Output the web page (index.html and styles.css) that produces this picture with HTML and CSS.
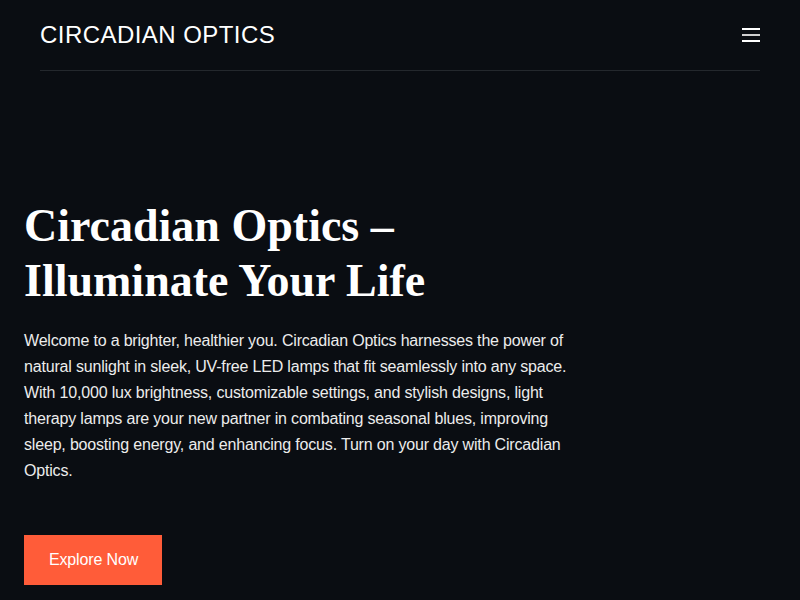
FILE: index.html
```html
<!DOCTYPE html>
<html lang="en">
<head>
<meta charset="utf-8">
<title>Circadian Optics</title>
<link rel="stylesheet" href="styles.css">
</head>
<body>
<header class="site-header">
  <div class="header-inner">
    <a class="logo" href="#">CIRCADIAN OPTICS</a>
    <button class="menu-btn" aria-label="Menu">
      <svg width="18" height="14" viewBox="0 0 18 14"><rect x="0" y="0" width="18" height="2" fill="#fff"/><rect x="0" y="6" width="18" height="2" fill="#d0d0d0"/><rect x="0" y="12" width="18" height="2" fill="#fff"/></svg>
    </button>
  </div>
</header>
<main class="hero">
  <h1 class="hero-title">Circadian Optics –<br>Illuminate Your Life</h1>
  <p class="hero-text">Welcome to a brighter, healthier you. Circadian Optics harnesses the power of natural sunlight in sleek, UV-free LED lamps that fit seamlessly into any space. With 10,000 lux brightness, customizable settings, and stylish designs, light therapy lamps are your new partner in combating seasonal blues, improving sleep, boosting energy, and enhancing focus. Turn on your day with Circadian Optics.</p>
  <a class="btn-primary" href="#">Explore Now</a>
</main>
</body>
</html>
```
FILE: styles.css
```css
html, body {
  margin: 0;
  padding: 0;
  background: #0a0d12;
  color: #ffffff;
  font-family: "Liberation Sans", Arial, sans-serif;
}
.site-header {
  padding: 0 40px;
}
.header-inner {
  display: flex;
  align-items: center;
  justify-content: space-between;
  height: 70px;
  border-bottom: 1px solid #24282d;
}
.logo {
  color: #ffffff;
  text-decoration: none;
  font-size: 24px;
  letter-spacing: 0.45px;
}
.menu-btn {
  background: none;
  border: 0;
  padding: 0;
  display: flex;
  cursor: pointer;
}
.hero {
  padding: 127px 24px 0;
}
.hero-title {
  margin: 0;
  font-family: "Liberation Serif", "Times New Roman", serif;
  font-weight: 700;
  font-size: 46px;
  line-height: 55px;
}
.hero-text {
  margin: 20px 0 0;
  max-width: 560px;
  font-size: 16px;
  line-height: 26px;
  letter-spacing: -0.18px;
  color: #ececec;
}
.btn-primary {
  display: inline-flex;
  align-items: center;
  margin-top: 51px;
  height: 50px;
  padding: 0 24px 0 25px;
  background: #ff5c39;
  color: #ffffff;
  text-decoration: none;
  font-size: 16px;
  letter-spacing: -0.15px;
}
```
